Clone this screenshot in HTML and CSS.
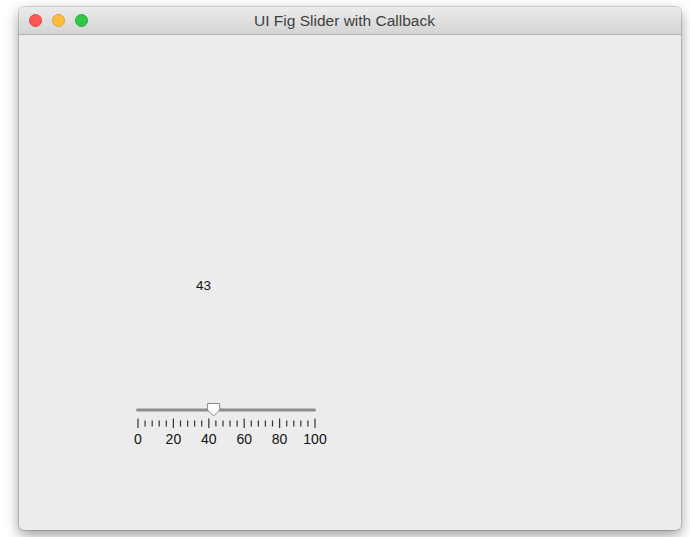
FILE: index.html
```html
<!DOCTYPE html>
<html>
<head>
<meta charset="utf-8">
<link rel="stylesheet" href="styles.css">
</head>
<body>
<div class="window">
  <div class="titlebar">
    <div class="lights">
      <span class="light red"></span>
      <span class="light yellow"></span>
      <span class="light green"></span>
    </div>
    <div class="title">UI Fig Slider with Callback</div>
  </div>
  <div class="content">
    <div class="value">43</div>
    <svg class="slider" width="200" height="52" viewBox="0 0 200 52">
      <line class="track" x1="7.5" y1="12" x2="184.5" y2="12"/>
      <g class="ticks">
        <line class="major" x1="8" y1="20.5" x2="8" y2="30"/>
        <line x1="15.1" y1="22.5" x2="15.1" y2="28.5"/>
        <line x1="22.2" y1="22.5" x2="22.2" y2="28.5"/>
        <line x1="29.2" y1="22.5" x2="29.2" y2="28.5"/>
        <line x1="36.3" y1="22.5" x2="36.3" y2="28.5"/>
        <line class="major" x1="43.4" y1="20.5" x2="43.4" y2="30"/>
        <line x1="50.5" y1="22.5" x2="50.5" y2="28.5"/>
        <line x1="57.6" y1="22.5" x2="57.6" y2="28.5"/>
        <line x1="64.6" y1="22.5" x2="64.6" y2="28.5"/>
        <line x1="71.7" y1="22.5" x2="71.7" y2="28.5"/>
        <line class="major" x1="78.8" y1="20.5" x2="78.8" y2="30"/>
        <line x1="85.9" y1="22.5" x2="85.9" y2="28.5"/>
        <line x1="93" y1="22.5" x2="93" y2="28.5"/>
        <line x1="100" y1="22.5" x2="100" y2="28.5"/>
        <line x1="107.1" y1="22.5" x2="107.1" y2="28.5"/>
        <line class="major" x1="114.2" y1="20.5" x2="114.2" y2="30"/>
        <line x1="121.3" y1="22.5" x2="121.3" y2="28.5"/>
        <line x1="128.4" y1="22.5" x2="128.4" y2="28.5"/>
        <line x1="135.4" y1="22.5" x2="135.4" y2="28.5"/>
        <line x1="142.5" y1="22.5" x2="142.5" y2="28.5"/>
        <line class="major" x1="149.6" y1="20.5" x2="149.6" y2="30"/>
        <line x1="156.7" y1="22.5" x2="156.7" y2="28.5"/>
        <line x1="163.8" y1="22.5" x2="163.8" y2="28.5"/>
        <line x1="170.8" y1="22.5" x2="170.8" y2="28.5"/>
        <line x1="177.9" y1="22.5" x2="177.9" y2="28.5"/>
        <line class="major" x1="185" y1="20.5" x2="185" y2="30"/>
      </g>
      <polygon class="thumb" points="77.6,5.5 89.6,5.5 89.6,12 83.6,18 77.6,12"/>
      <g class="labels">
        <text x="8" y="46">0</text>
        <text x="43.4" y="46">20</text>
        <text x="78.8" y="46">40</text>
        <text x="114.2" y="46">60</text>
        <text x="149.6" y="46">80</text>
        <text x="185" y="46">100</text>
      </g>
    </svg>
  </div>
</div>
</body>
</html>
```
FILE: styles.css
```css
html, body {
  margin: 0;
  padding: 0;
  background: #ffffff;
}
body {
  padding: 7px 9px 7px 19px;
  font-family: "Liberation Sans", Arial, sans-serif;
}
.window {
  width: 662px;
  height: 523px;
  background: #ececec;
  border-radius: 5px;
  box-shadow: 0 0 0 1px rgba(0,0,0,0.14), 0 5px 14px rgba(0,0,0,0.4);
  display: flex;
  flex-direction: column;
  overflow: hidden;
}
.titlebar {
  height: 27px;
  flex: none;
  background: linear-gradient(#ebebeb, #d4d4d4);
  border-bottom: 1px solid #b1b1b1;
  display: flex;
  align-items: center;
}
.lights {
  display: flex;
  gap: 10px;
  padding-left: 10px;
}
.light {
  width: 13px;
  height: 13px;
  border-radius: 50%;
  box-sizing: border-box;
}
.red { background: #fc5753; border: 1px solid #df4744; }
.yellow { background: #fdbc40; border: 1px solid #de9f34; }
.green { background: #33c748; border: 1px solid #27aa35; }
.title {
  flex: 1;
  text-align: center;
  font-size: 15.5px;
  color: #3f3f3f;
  margin-right: 70px;
  margin-left: -10px;
}
.content {
  flex: 1;
  display: flex;
  flex-direction: column;
  align-items: flex-start;
}
.value {
  margin-top: 244px;
  margin-left: 177px;
  font-size: 13.5px;
  line-height: 14px;
  color: #111;
}
.slider {
  margin-top: 105px;
  margin-left: 111px;
  display: block;
}
.track {
  stroke: #8c8c8c;
  stroke-width: 3;
  stroke-linecap: round;
}
.ticks line {
  stroke: #333;
  stroke-width: 1.2;
}
.thumb {
  fill: #ffffff;
  stroke: #8a8a8a;
  stroke-width: 1;
}
.labels text {
  font-family: "Liberation Sans", Arial, sans-serif;
  font-size: 14px;
  fill: #111;
  text-anchor: middle;
}
```
